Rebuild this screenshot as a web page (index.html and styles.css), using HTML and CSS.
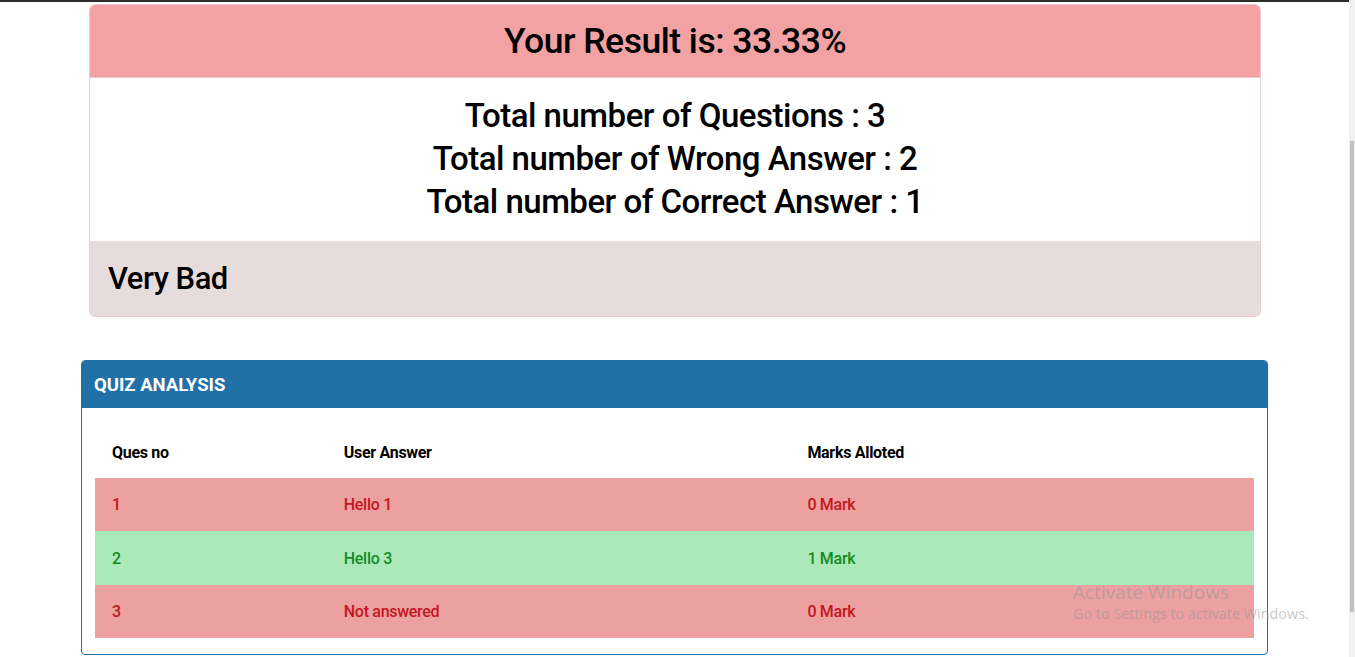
FILE: index.html
```html
<!DOCTYPE html>
<html>
<head>
<meta charset="utf-8">
<link rel="stylesheet" href="styles.css">
</head>
<body>
<div class="topline"></div>
<main class="page">
  <section class="result-card">
    <div class="result-head">Your Result is: 33.33%</div>
    <div class="result-body">
      <p>Total number of Questions : 3</p>
      <p>Total number of Wrong Answer : 2</p>
      <p>Total number of Correct Answer : 1</p>
    </div>
    <div class="result-foot">Very Bad</div>
  </section>

  <section class="analysis-card">
    <div class="analysis-head">QUIZ ANALYSIS</div>
    <div class="analysis-body">
      <table class="analysis-table">
        <thead>
          <tr><th class="c1">Ques no</th><th class="c2">User Answer</th><th class="c3">Marks Alloted</th></tr>
        </thead>
        <tbody>
          <tr class="wrong"><td>1</td><td>Hello 1</td><td>0 Mark</td></tr>
          <tr class="right"><td>2</td><td>Hello 3</td><td>1 Mark</td></tr>
          <tr class="wrong"><td>3</td><td>Not answered</td><td>0 Mark</td></tr>
        </tbody>
      </table>
    </div>
  </section>
</main>
<div class="scrollbar"><div class="thumb"></div></div>
<div class="watermark">
  <div class="wm-title">Activate Windows</div>
  <div class="wm-sub">Go to Settings to activate Windows.</div>
</div>
</body>
</html>
```

FILE: styles.css
```css
html, body {
  margin: 0;
  padding: 0;
  background: #fff;
  overflow: hidden;
}
body {
  font-family: Roboto, "Liberation Sans", sans-serif;
  color: #000;
  width: 1355px;
  height: 657px;
  position: relative;
}
.topline {
  height: 2px;
  background: #2b2b2b;
  width: 1349px;
}
.page {
  padding: 2px 0 0 81px;
  width: 1187px;
}
.result-card {
  margin: 0 7px 0 8px;
  border: 1px solid #ebcccc;
  border-radius: 6px;
  overflow: hidden;
}
.result-head {
  background: #f2a2a2;
  height: 72px;
  display: flex;
  align-items: center;
  justify-content: center;
  font-size: 35.5px;
  font-weight: 500;
  letter-spacing: -0.5px;
}
.result-body {
  padding: 16px 0 18px;
  text-align: center;
  border-top: 1px solid #ebcccc;
}
.result-body p {
  margin: 0;
  line-height: 43px;
  font-size: 33px;
  font-weight: 500;
  letter-spacing: -0.5px;
}
.result-foot {
  background: #e6dcdc;
  height: 75px;
  display: flex;
  align-items: center;
  padding-left: 18px;
  font-size: 31px;
  font-weight: 500;
  letter-spacing: -0.5px;
}
.analysis-card {
  margin-top: 43px;
  border: 1px solid #2270a8;
  border-radius: 4px;
  overflow: hidden;
}
.analysis-head {
  background: #2270a8;
  color: #fff;
  height: 47px;
  display: flex;
  align-items: center;
  padding-left: 12px;
  font-size: 18.5px;
  font-weight: 700;
}
.analysis-body {
  padding: 25px 13px 16px 13px;
}
.analysis-table {
  width: 100%;
  border-collapse: collapse;
  font-size: 16px;
}
.analysis-table th {
  text-align: left;
  font-weight: 700;
  padding: 10px 0 15px 17px;
  line-height: 20px;
  vertical-align: top;
  letter-spacing: -0.3px;
}
.analysis-table .c1 { width: 20%; }
.analysis-table .c2 { width: 40%; }
.analysis-table .c3 { width: 40%; }
.analysis-table td {
  padding: 0 0 0 17px;
  height: 53.4px;
  vertical-align: middle;
  font-weight: 500;
  letter-spacing: -0.3px;
}
.wrong { background: #eca0a0; color: #c4161c; }
.right { background: #abe9bb; color: #168a22; }
.scrollbar {
  position: absolute;
  top: 0;
  right: 0;
  width: 6px;
  height: 657px;
  background: #f0f0f0;
}
.thumb {
  position: absolute;
  left: 1px;
  width: 4px;
  top: 141px;
  height: 471px;
  background: #c1c1c1;
}
.watermark {
  position: absolute;
  left: 1073px;
  top: 581px;
  color: rgba(150, 150, 150, 0.55);
  font-family: "Open Sans", "Liberation Sans", sans-serif;
  pointer-events: none;
}
.wm-title { font-size: 19px; line-height: 22px; }
.wm-sub { font-size: 14.4px; line-height: 22px; }
```
